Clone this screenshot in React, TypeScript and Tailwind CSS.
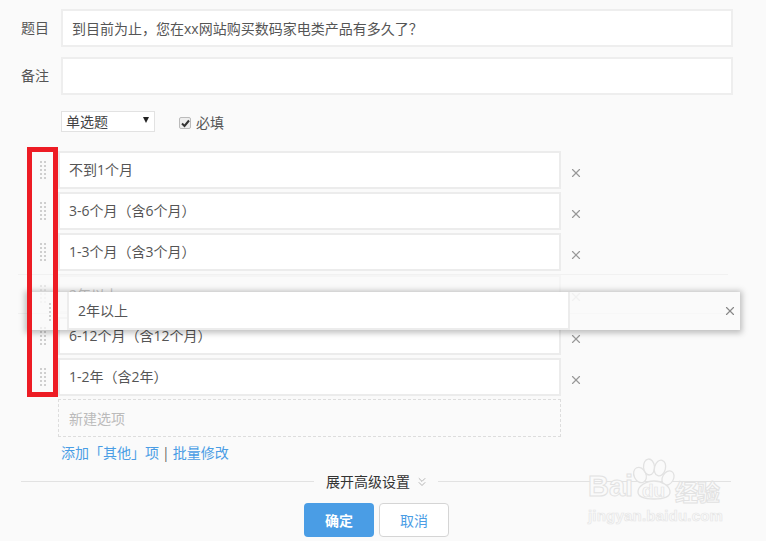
import { ChevronsDown, X } from "lucide-react";

const FONT = "font-['Open_Sans','Noto_Sans_CJK_SC',sans-serif]";

function Grip({ className = "" }: { className?: string }) {
  const dots = [0, 4, 8, 12, 16];
  return (
    <svg width="6" height="18" viewBox="0 0 6 18" className={className} aria-hidden>
      {dots.map((y) => (
        <g key={y} fill="#cfcfcf">
          <rect x="0" y={y} width="2" height="2" />
          <rect x="4" y={y} width="2" height="2" />
        </g>
      ))}
    </svg>
  );
}

function OptionRow({ label }: { label: string }) {
  return (
    <div className="flex h-[38px] items-center">
      <div className="flex w-[20px] justify-center pr-[10px]">
        <Grip />
      </div>
      <div className="flex h-full w-[503px] items-center border-2 border-[#ececec] bg-white pb-[2px] pl-[9px] text-[14px] text-[#555]">
        {label}
      </div>
      <X className="ml-[8px] mt-[5px] h-[14px] w-[14px] text-[#999]" strokeWidth={2} />
    </div>
  );
}

export default function App() {
  return (
    <div className={`relative h-[541px] w-[766px] overflow-hidden bg-[#fafafa] ${FONT}`}>
      <div className="flex flex-col pt-[9px]">
        {/* Title and remark */}
        <div className="flex h-[38px] items-center">
          <span className="w-[61px] pb-[2px] pl-[21px] text-[14px] text-[#555]">题目</span>
          <div className="flex h-full w-[672px] items-center border-2 border-[#eeeeee] bg-white pl-[9px] text-[14px] text-[#555]">
            到目前为止，您在xx网站购买数码家电类产品有多久了？
          </div>
        </div>
        <div className="mt-[10px] flex h-[38px] items-center">
          <span className="w-[61px] pb-[2px] pl-[21px] text-[14px] text-[#555]">备注</span>
          <div className="h-full w-[672px] border-2 border-[#eeeeee] bg-white" />
        </div>

        {/* Type and required */}
        <div className="mt-[16px] flex h-[21px] items-center pl-[61px]">
          <div className="flex h-full w-[94px] items-center justify-between border border-[#e2e2e2] bg-white pl-[4px] pr-[5px] text-[14px] text-[#444]">
            <span>单选题</span>
            <span className="mb-[4px] h-0 w-0 border-x-[3px] border-t-[6px] border-x-transparent border-t-[#222]" />
          </div>
          <span className="ml-[24px] mt-[3px] flex h-[12px] w-[12px] items-center justify-center rounded-[2px] border border-[#bbb] bg-[#eee]">
            <svg width="9" height="9" viewBox="0 0 9 9" aria-hidden>
              <path d="M1 4.5 3.5 7 8 1.5" fill="none" stroke="#333" strokeWidth="2" />
            </svg>
          </span>
          <span className="ml-[5px] mt-[2px] text-[14px] text-[#555]">必填</span>
        </div>

        {/* Options */}
        <div className="mt-[19px] flex flex-col gap-[3px] pl-[38px]">
          <OptionRow label="不到1个月" />
          <OptionRow label="3-6个月（含6个月）" />
          <OptionRow label="1-3个月（含3个月）" />
          {/* Slot left by the row being dragged */}
          <div className="-ml-[20px] flex h-[40px] w-[710px] items-start border-y border-[#f1f1f1] pl-[20px]">
            <div className="flex w-[20px] justify-center pr-[10px] pt-[10px] opacity-40">
              <Grip />
            </div>
            <div className="flex h-[38px] w-[503px] items-center border-2 border-[#ececec] pl-[9px] text-[14px] text-[#555] opacity-30">
              2年以上
            </div>
            <X className="ml-[8px] mt-[15px] h-[14px] w-[14px] text-[#999] opacity-30" strokeWidth={2} />
          </div>
          <OptionRow label="6-12个月（含12个月）" />
          <OptionRow label="1-2年（含2年）" />
          <div className="ml-[20px] flex h-[38px] w-[503px] items-center border border-dashed border-[#ddd] pl-[10px] text-[14px] text-[#bbbbbb]">
            新建选项
          </div>
        </div>

        {/* Links */}
        <div className="mt-[7px] flex h-[18px] gap-[3px] pl-[61px] text-[14px] leading-[18px] text-[#666]">
          <span className="text-[#4a9de5]">添加「其他」项</span>
          <span>|</span>
          <span className="text-[#4a9de5]">批量修改</span>
        </div>

        {/* Advanced divider */}
        <div className="mt-[10px] flex h-[18px] items-center pl-[21px] text-[14px] text-[#333]">
          <div className="h-[1px] w-[293px] bg-[#e2e2e2]" />
          <span className="ml-[12px]">展开高级设置</span>
          <ChevronsDown className="ml-[5px] mt-[1px] h-[14px] w-[14px] text-[#999]" strokeWidth={1.25} />
          <div className="ml-[9px] h-[1px] w-[293px] bg-[#e2e2e2]" />
        </div>

        {/* Buttons */}
        <div className="mt-[13px] flex gap-[5px] pl-[304px] text-[14px]">
          <div className="flex h-[34px] w-[70px] items-center justify-center rounded-[4px] bg-[#4a9de5] font-bold text-white">
            确定
          </div>
          <div className="flex h-[34px] w-[70px] items-center justify-center rounded-[4px] border border-[#d5d5d5] bg-white text-[#4a9de5]">
            取消
          </div>
        </div>
      </div>

      {/* Row being dragged */}
      <div className="absolute left-[27px] top-[292px] flex h-[38px] w-[713px] items-center bg-[#fafafa]/70 shadow-[0_1px_6px_2px_rgba(0,0,0,0.25)]">
        <Grip className="ml-[22px] mt-[2px]" />
        <div className="ml-[12px] flex h-full w-[503px] items-center border-2 border-t-0 border-[#ececec] bg-white pl-[9px] text-[14px] text-[#555]">
          2年以上
        </div>
        <X className="ml-[153px] h-[14px] w-[14px] text-[#888]" strokeWidth={2} />
      </div>

      {/* Red highlight box */}
      <div className="absolute left-[27px] top-[147px] h-[250px] w-[31px] border-[5px] border-[#ed1c24]" />

      {/* Watermark */}
      <div className="pointer-events-none absolute left-[588px] top-[456px] h-[70px] w-[140px] font-['Liberation_Sans',sans-serif]">
        <svg width="60" height="50" viewBox="0 0 60 50" className="absolute left-[42px] top-0" aria-hidden>
          <g fill="#fafafa" stroke="#e2e2e2" strokeWidth="1.3">
            <ellipse cx="10" cy="19" rx="6" ry="8" transform="rotate(-25 10 19)" />
            <ellipse cx="19" cy="11" rx="5.5" ry="8" transform="rotate(-5 19 11)" />
            <ellipse cx="30" cy="12" rx="5.5" ry="8" transform="rotate(15 30 12)" />
            <ellipse cx="38" cy="22" rx="5.5" ry="7.5" transform="rotate(30 38 22)" />
            <path d="M8 36c0-6 8-11 16-11s16 5 16 11c0 5-7 7-16 7S8 41 8 36Z" />
          </g>
        </svg>
        <span className="absolute left-0 top-[14px] text-[29px] font-bold leading-[32px] text-[#fafafa] [-webkit-text-stroke:1px_#e2e2e2]">
          Bai
        </span>
        <span className="absolute left-[54px] top-[25px] text-[19px] font-bold leading-[20px] text-[#fafafa] [-webkit-text-stroke:0.7px_#e2e2e2]">
          du
        </span>
        <span className="absolute left-[87px] top-[22px] font-['Noto_Sans_CJK_SC',sans-serif] text-[23px] font-bold leading-[26px] tracking-[-1px] text-[#fafafa] [-webkit-text-stroke:1px_#e2e2e2]">
          经验
        </span>
        <span className="absolute left-0 top-[51px] text-[15px] font-bold leading-[18px] tracking-[0.2px] text-[#fafafa] [-webkit-text-stroke:0.7px_#e6e6e6]">
          jingyan.baidu.com
        </span>
      </div>
    </div>
  );
}
